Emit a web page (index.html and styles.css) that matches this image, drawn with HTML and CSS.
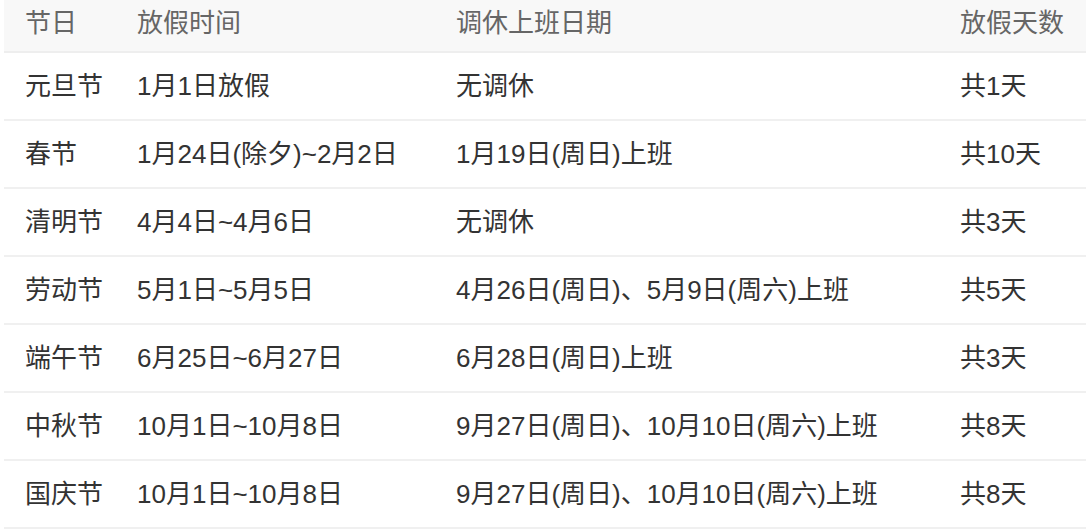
FILE: index.html
```html
<!DOCTYPE html>
<html lang="zh-CN">
<head>
<meta charset="utf-8">
<link rel="stylesheet" href="styles.css">
</head>
<body>
<table class="holidays">
  <colgroup>
    <col class="c1"><col class="c2"><col class="c3"><col class="c4">
  </colgroup>
  <thead>
    <tr><th>节日</th><th>放假时间</th><th>调休上班日期</th><th>放假天数</th></tr>
  </thead>
  <tbody>
    <tr><td>元旦节</td><td>1月1日放假</td><td>无调休</td><td>共1天</td></tr>
    <tr><td>春节</td><td>1月24日(除夕)~2月2日</td><td>1月19日(周日)上班</td><td>共10天</td></tr>
    <tr><td>清明节</td><td>4月4日~4月6日</td><td>无调休</td><td>共3天</td></tr>
    <tr><td>劳动节</td><td>5月1日~5月5日</td><td>4月26日(周日)、5月9日(周六)上班</td><td>共5天</td></tr>
    <tr><td>端午节</td><td>6月25日~6月27日</td><td>6月28日(周日)上班</td><td>共3天</td></tr>
    <tr><td>中秋节</td><td>10月1日~10月8日</td><td>9月27日(周日)、10月10日(周六)上班</td><td>共8天</td></tr>
    <tr><td>国庆节</td><td>10月1日~10月8日</td><td>9月27日(周日)、10月10日(周六)上班</td><td>共8天</td></tr>
  </tbody>
</table>
</body>
</html>
```

FILE: styles.css
```css
html, body {
  margin: 0;
  padding: 0;
  background: #ffffff;
}

.holidays {
  margin-left: 4px;
  width: 1082px;
  table-layout: fixed;
  border-collapse: collapse;
  font-family: "Liberation Sans", "Noto Sans CJK SC", sans-serif;
  font-size: 26px;
  line-height: 30px;
  color: #333333;
}

.c1 { width: 113px; }
.c2 { width: 319px; }
.c3 { width: 504px; }
.c4 { width: 146px; }

.holidays th {
  background: #f8f8f8;
  color: #666666;
  font-weight: normal;
  text-align: left;
  height: 52px;
  padding: 8px 0 0 20px;
  vertical-align: top;
  box-sizing: border-box;
  border-bottom: 2px solid #eeeeee;
}

.holidays th:first-child,
.holidays td:first-child {
  padding-left: 21px;
}

.holidays td {
  height: 68px;
  box-sizing: border-box;
  padding: 0 0 0 20px;
  border-bottom: 2px solid #f0f0f0;
  vertical-align: middle;
  white-space: nowrap;
}
```
